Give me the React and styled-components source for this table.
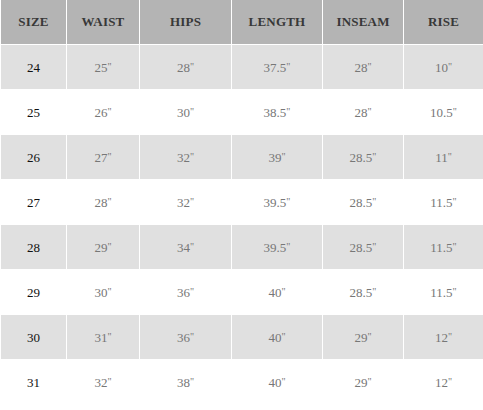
import React from 'react';
import styled, { createGlobalStyle } from 'styled-components';

const GlobalStyle = createGlobalStyle`
  html, body {
    margin: 0;
    padding: 0;
    background: #fff;
  }
  body {
    font-family: "Liberation Serif", "Times New Roman", serif;
  }
`;

const columns = ['SIZE', 'WAIST', 'HIPS', 'LENGTH', 'INSEAM', 'RISE'];

const rows = [
  ['24', '25', '28', '37.5', '28', '10'],
  ['25', '26', '30', '38.5', '28', '10.5'],
  ['26', '27', '32', '39', '28.5', '11'],
  ['27', '28', '32', '39.5', '28.5', '11.5'],
  ['28', '29', '34', '39.5', '28.5', '11.5'],
  ['29', '30', '36', '40', '28.5', '11.5'],
  ['30', '31', '36', '40', '29', '12'],
  ['31', '32', '38', '40', '29', '12'],
];

const Table = styled.div`
  display: grid;
  grid-template-columns: 65px 72px 91px 90px 80px 79px;
  grid-auto-rows: 44px;
  gap: 1px;
  padding-left: 1px;
  width: 483px;
`;

const HeadCell = styled.div`
  display: flex;
  align-items: center;
  justify-content: center;
  background: #b4b4b4;
  color: #383838;
  font-size: 13px;
  font-weight: bold;
  letter-spacing: 0.2px;
`;

const Cell = styled.div`
  display: flex;
  align-items: center;
  justify-content: center;
  background: ${(p) => (p.$shaded ? '#e0e0e0' : '#fff')};
  color: ${(p) => (p.$first ? '#111' : '#777')};
  font-size: 13px;
  font-variant-numeric: oldstyle-nums;
  padding-top: 2px;
`;

const Inch = styled.sup`
  font-size: 10px;
  line-height: 0;
  position: relative;
  top: -1px;
`;

export default function App() {
  return (
    <>
      <GlobalStyle />
      <Table>
        {columns.map((c) => (
          <HeadCell key={c}>{c}</HeadCell>
        ))}
        {rows.map((row, i) =>
          row.map((v, j) => (
            <Cell key={`${i}-${j}`} $shaded={i % 2 === 0} $first={j === 0}>
              {v}
              {j > 0 && <Inch>"</Inch>}
            </Cell>
          ))
        )}
      </Table>
    </>
  );
}
